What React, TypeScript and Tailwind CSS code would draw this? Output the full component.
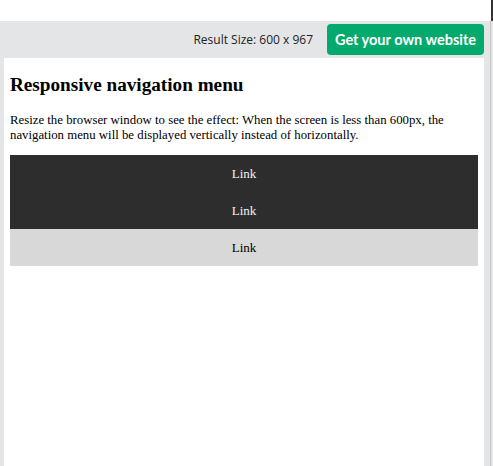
import React from "react";

export default function App() {
  return (
    <div className="w-[493px] h-[466px] bg-white flex flex-col overflow-hidden">
      <div className="h-[21px] shrink-0 bg-white flex justify-end">
        <div className="w-[2px] h-full bg-[#333]" />
      </div>
      <div className="flex-1 flex bg-[#e4e5e7] min-h-0">
        <div className="flex-1 flex flex-col pl-[4px] pr-[6px]">
          <div className="h-[37px] shrink-0 flex items-center justify-end gap-[14px]">
            <span
              className="text-[12px] text-[#222]"
              style={{ fontFamily: '"Open Sans", "Noto Sans", sans-serif' }}
            >
              Result Size: 600 x 967
            </span>
            <div
              className="h-[31px] w-[157px] rounded-[4px] bg-[#04aa6d] text-white flex items-center justify-center text-[14.5px] font-bold"
              style={{ fontFamily: 'Lato, "Open Sans", sans-serif' }}
            >
              Get your own website
            </div>
          </div>
          <div
            className="flex-1 bg-white px-[6px] text-black"
            style={{ fontFamily: '"Liberation Serif", "Times New Roman", serif' }}
          >
            <h2 className="text-[19.2px] font-bold leading-[24px] mt-[15px]">
              Responsive navigation menu
            </h2>
            <p className="text-[12.8px] leading-[15px] mt-[16px]">
              Resize the browser window to see the effect: When the screen is less than 600px, the
              navigation menu will be displayed vertically instead of horizontally.
            </p>
            <div className="mt-[12px] flex flex-col text-[13px]">
              <div className="h-[37px] bg-[#2d2d2d] text-[#f2f2f2] flex items-center justify-center">
                Link
              </div>
              <div className="h-[37px] bg-[#2d2d2d] text-[#f2f2f2] flex items-center justify-center">
                Link
              </div>
              <div className="h-[37px] bg-[#d8d8d8] text-black flex items-center justify-center">
                Link
              </div>
            </div>
          </div>
        </div>
        <div className="w-[1px] bg-[#c4c4c4]" />
        <div className="w-[2px] bg-[#e4e5e7]" />
      </div>
    </div>
  );
}
